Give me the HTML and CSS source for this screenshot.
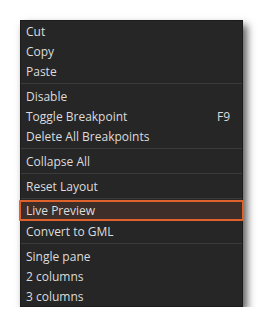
FILE: index.html
```html
<!DOCTYPE html>
<html lang="en">
<head>
    <meta charset="UTF-8">
    <title>Context Menu</title>
    <link rel="stylesheet" href="styles.css">
</head>
<body>
    <div class="menu">
        <div class="item">Cut</div>
        <div class="item">Copy</div>
        <div class="item">Paste</div>
        <div class="sep"></div>
        <div class="item">Disable</div>
        <div class="item"><span>Toggle Breakpoint</span><span class="key">F9</span></div>
        <div class="item">Delete All Breakpoints</div>
        <div class="sep"></div>
        <div class="item">Collapse All</div>
        <div class="sep"></div>
        <div class="item">Reset Layout</div>
        <div class="sep"></div>
        <div class="item active">Live Preview</div>
        <div class="item">Convert to GML</div>
        <div class="sep"></div>
        <div class="item">Single pane</div>
        <div class="item">2 columns</div>
        <div class="item">3 columns</div>
    </div>
</body>
</html>
```

FILE: styles.css
```css
body {
    margin: 0;
    background-color: #fff;
    font-family: "Open Sans", sans-serif;
}

.menu {
    margin: 20px 0 0 20px;
    width: 221px;
    background-color: #262626;
    border: 1px solid #1c1c1c;
    box-shadow: 4px 5px 8px rgba(0, 0, 0, 0.65);
}

.item {
    display: flex;
    justify-content: space-between;
    align-items: center;
    height: 20px;
    padding: 0 12px 0 5px;
    font-size: 12px;
    color: #dcdcdc;
}

.sep {
    height: 1px;
    margin: 2px 0;
    background-color: #3b3b3b;
}

.item.active {
    margin: -1px -2px 0 -2px;
    padding-left: 5px;
    height: 17px;
    background-color: #3d2e29;
    border: 2px solid #df612b;
    border-radius: 1px;
}
```
